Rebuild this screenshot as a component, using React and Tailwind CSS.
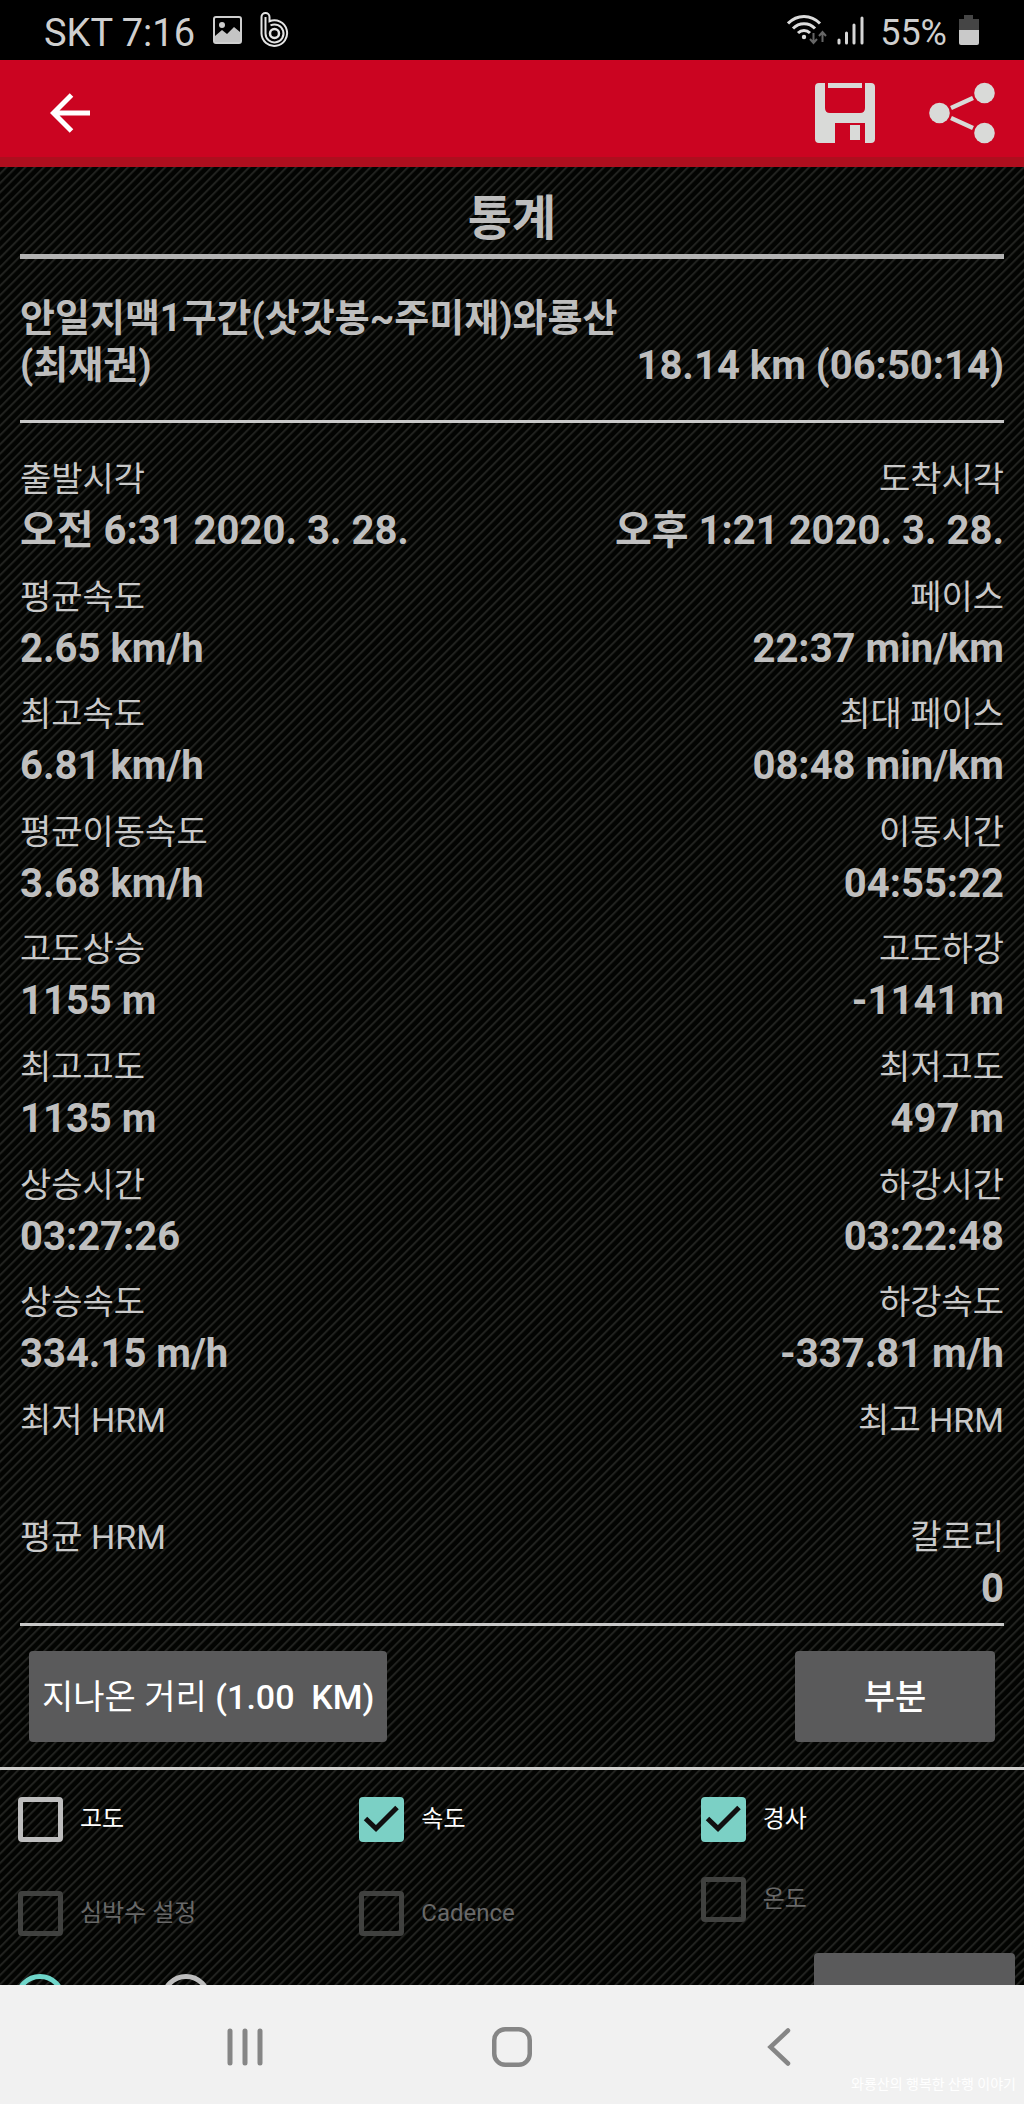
import React, { useState } from 'react';

const stats = [
  { left: ['출발시각', '오전 6:31 2020. 3. 28.'], right: ['도착시각', '오후 1:21 2020. 3. 28.'] },
  { left: ['평균속도', '2.65 km/h'], right: ['페이스', '22:37 min/km'] },
  { left: ['최고속도', '6.81 km/h'], right: ['최대 페이스', '08:48 min/km'] },
  { left: ['평균이동속도', '3.68 km/h'], right: ['이동시간', '04:55:22'] },
  { left: ['고도상승', '1155 m'], right: ['고도하강', '-1141 m'] },
  { left: ['최고고도', '1135 m'], right: ['최저고도', '497 m'] },
  { left: ['상승시간', '03:27:26'], right: ['하강시간', '03:22:48'] },
  { left: ['상승속도', '334.15 m/h'], right: ['하강속도', '-337.81 m/h'] },
  { left: ['최저 HRM', ''], right: ['최고 HRM', ''] },
  { left: ['평균 HRM', ''], right: ['칼로리', '0'] },
];

const options = [
  { id: 'altitude', label: '고도' },
  { id: 'speed', label: '속도' },
  { id: 'slope', label: '경사' },
  { id: 'hrm', label: '심박수 설정', disabled: true, className: 'pt-[14px]' },
  { id: 'cadence', label: 'Cadence', disabled: true, className: 'pt-[14px]' },
  { id: 'temp', label: '온도', disabled: true, className: 'self-start' },
];

export default function App() {
  const [checked, setChecked] = useState({ speed: true, slope: true });
  const [axis, setAxis] = useState('distance');

  const toggle = (id) => setChecked((c) => ({ ...c, [id]: !c[id] }));

  return (
    <div className="min-h-screen flex flex-col overflow-hidden bg-black font-['Roboto','Noto_Sans_CJK_KR',sans-serif]">
      <StatusBar />

      <header className="h-[107px] flex items-center justify-between bg-[#cb0421] border-b-[10px] border-[#ae0e1e] pt-[9px] pl-[50px] pr-[29px]">
        <button aria-label="뒤로"><BackArrow /></button>
        <div className="flex items-center gap-[54px]">
          <button aria-label="저장"><SaveIcon /></button>
          <button aria-label="공유"><ShareIcon /></button>
        </div>
      </header>

      <main className={`flex-1 flex flex-col ${stripes}`}>
        <div className="flex-1 flex flex-col px-5">
          <h1 className="pt-5 pb-[3px] text-center text-[48px] leading-[64px] font-bold text-[#bdbdbd]">통계</h1>
          <hr className="border-0 h-[5px] bg-[#b3b3b3]" />

          <div className="flex items-end justify-between gap-4 pt-9 pb-[31px] leading-[47px] font-bold text-[#bdbdbd]">
            <h2 className="text-[38px]">안일지맥1구간(삿갓봉~주미재)와룡산 (최재권)</h2>
            <p className="text-[40px] whitespace-nowrap">18.14 km (06:50:14)</p>
          </div>
          <hr className="border-0 h-[3px] bg-[#c8c8c8]" />

          <div className="flex-1 grid auto-rows-fr pt-6">
            {stats.map((row) => (
              <dl key={row.left[0]} className="flex justify-between pt-[9px]">
                <Stat label={row.left[0]} value={row.left[1]} />
                <Stat label={row.right[0]} value={row.right[1]} className="text-right" />
              </dl>
            ))}
          </div>
          <hr className="border-0 h-[3px] bg-[#c8c8c8]" />
        </div>

        <div className="flex justify-between px-[29px] py-[25px]">
          <button className={`${btnClass} px-[13px] whitespace-pre font-normal`}>지나온 거리 <span className="font-medium">(1.00  KM)</span></button>
          <button className={`${btnClass} w-[200px] font-medium`}>부분</button>
        </div>
        <hr className="border-0 h-[3px] bg-[#cdcdcb]" />

        <div className="grid grid-cols-3 gap-y-[35px] pt-[27px]">
          {options.map((o) => (
            <CheckOption key={o.id} option={o} checked={!!checked[o.id]} onChange={() => toggle(o.id)} />
          ))}
        </div>

        {/* runs on under the navigation bar */}
        <div className="h-[49px] overflow-hidden flex justify-between pl-[15px] pr-[9px]">
          <div className="flex gap-24 pt-[38px]">
            <input type="radio" name="axis" aria-label="거리" checked={axis === 'distance'} onChange={() => setAxis('distance')} className={radioClass} />
            <input type="radio" name="axis" aria-label="시간" checked={axis === 'time'} onChange={() => setAxis('time')} className={radioClass} />
          </div>
          <button aria-label="그래프" className={`${btnClass} w-[201px] mt-[17px]`} />
        </div>
      </main>

      <nav className="relative h-[119px] grid grid-cols-3 place-items-center bg-[#f1f1f1] px-28 pt-1">
        <button aria-label="최근 앱">
          <svg width="36" height="40" viewBox="0 0 36 40" stroke="#868686" strokeWidth="5" strokeLinecap="round">
            <path d="M3 4v32M18 4v32M33 4v32" />
          </svg>
        </button>
        <button aria-label="홈">
          <svg width="40" height="40" viewBox="0 0 40 40" fill="none" stroke="#868686" strokeWidth="4.5">
            <rect x="2.25" y="2.25" width="35.5" height="35.5" rx="11" />
          </svg>
        </button>
        <button aria-label="이전">
          <svg width="24" height="40" viewBox="0 0 24 40" fill="none" stroke="#868686" strokeWidth="4.5" strokeLinecap="round">
            <path d="M21 3.5L3.5 20L21 36.5" />
          </svg>
        </button>
        <span className="absolute right-2 bottom-2 text-sm leading-6 text-white">와룡산의 행복한 산행 이야기</span>
      </nav>
    </div>
  );
}

const stripes = 'bg-[#030402] bg-[repeating-linear-gradient(135deg,#030402_0%,#030402_calc(100%/12),#232421_calc(100%/9),#232421_calc(100%/8),#030402_calc(100%/6))] bg-size-[28px_28px]';
const btnClass = 'h-[91px] rounded-[4px] bg-[#5a5a5b] text-[34px] leading-[48px] text-white';
const radioClass = 'appearance-none size-[50px] shrink-0 rounded-full border-[5px] border-[#bdbdbd] checked:border-[#6fd6ca]';

function Stat({ label, value, className = '' }) {
  return (
    <div className={className}>
      <dt className="text-[34px] leading-[46px] text-[#c9c9c9]">{label}</dt>
      <dd className="text-[40px] leading-[58px] font-bold text-[#bfbfbf]">{value}</dd>
    </div>
  );
}

function CheckOption({ option, checked, onChange }) {
  return (
    <label className={`flex items-center gap-[17px] pl-[18px] text-2xl leading-[45px] ${option.disabled ? 'text-[#686868]' : 'text-white'} ${option.className || ''}`}>
      <span className="relative size-[45px] shrink-0">
        <input
          type="checkbox"
          checked={checked}
          disabled={option.disabled}
          onChange={onChange}
          className="block appearance-none size-[45px] rounded-[4px] border-[5px] border-[#bdbdbd] checked:border-[#7bd0c5] checked:bg-[#7bd0c5] disabled:border-[#40413f]"
        />
        {checked && (
          <svg className="absolute inset-0 pointer-events-none" width="45" height="45" viewBox="0 0 45 45" fill="none" stroke="#110f10" strokeWidth="5">
            <path d="M6.5 21.5L17 31.5L38 10.5" />
          </svg>
        )}
      </span>
      {option.label}
    </label>
  );
}

function StatusBar() {
  return (
    <div className="h-[60px] flex items-center justify-between bg-black pl-11 pr-[45px] leading-[60px] text-[#cfcfcf]">
      <div className="flex items-center">
        <span className="pt-[5px] text-[38px]">SKT 7:16</span>
        <svg className="ml-[18px]" width="29" height="28" viewBox="0 0 29 28">
          <rect x="1" y="1" width="27" height="26" rx="2" fill="none" stroke="#cfcfcf" strokeWidth="2" />
          <circle cx="9" cy="9" r="3" fill="#cfcfcf" />
          <path d="M2 20L9 14L14 18L21 11L27 16V26H2Z" fill="#c4c4c4" />
        </svg>
        <svg className="ml-[18px]" width="29" height="36" viewBox="0 0 29 36" fill="none" stroke="#e4e4e4" strokeWidth="2">
          <path d="M1.500 5a4 4 0 0 1 8 0V9.300A12.800 12.800 0 1 1 1.500 21.500Z" />
          <path d="M5.500 5V21.500a9 9 0 1 0 5-8.100" />
          <circle cx="14.500" cy="21.500" r="4.500" strokeWidth="2.500" />
        </svg>
      </div>
      <div className="flex items-center">
        <svg width="40" height="32" viewBox="0 0 40 32" fill="none" stroke="#dcdcdc" strokeWidth="3">
          <path d="M1 9.500C10 0 24 0 33 9.500M6 14.500C12 8 22 8 28 14.500M11 19C14.500 15.500 19.500 15.500 23 19" />
          <circle cx="17" cy="23" r="2.200" fill="#dcdcdc" stroke="none" />
          <path d="M26.500 19v9.500M23 25l3.500 4l3.500-4M35.500 28V18.500M32 22l3.500-4l3.500 4" stroke="#666" strokeWidth="2" />
        </svg>
        <svg className="ml-[10px]" width="27" height="29" viewBox="0 0 27 29" stroke="#d6d6d6" strokeWidth="3" strokeLinecap="round">
          <path d="M2 24v3M9.500 17v10M17 9v18M25 2v25" />
        </svg>
        <span className="ml-4 pt-[5px] text-[36px]">55%</span>
        <svg className="ml-3" width="20" height="30" viewBox="0 0 20 30">
          <path d="M5 0h9v4h6v11H0V4h5Z" fill="#454545" />
          <path d="M0 15h20v13q0 2-2 2H2q-2 0-2-2Z" fill="#c9c9c9" />
        </svg>
      </div>
    </div>
  );
}

function BackArrow() {
  return (
    <svg width="40" height="40" viewBox="0 0 40 40" fill="none" stroke="#fff" strokeWidth="5">
      <path d="M40 20H4M21.500 2L3.500 20L21.500 38" />
    </svg>
  );
}

function SaveIcon() {
  return (
    <svg width="60" height="60" viewBox="0 0 60 60" fill="#d9dad8">
      <path d="M4 0H10V25Q10 30 15 30H45Q50 30 50 25V0H56Q60 0 60 4V56Q60 60 56 60H50V40H20V60H4Q0 60 0 56V4Q0 0 4 0Z" />
      <path d="M13 0H47V5H13ZM35 42H45V57H35Z" />
    </svg>
  );
}

function ShareIcon() {
  return (
    <svg width="66" height="62" viewBox="0 0 66 62" fill="#d9dad8" stroke="#d9dad8">
      <g stroke="none">
        <circle cx="10.500" cy="31" r="10.300" />
        <circle cx="55.500" cy="11" r="10.300" />
        <circle cx="55.500" cy="51" r="10.300" />
      </g>
      <path d="M22 26L44 16M22 36L44 46" strokeWidth="4.500" />
    </svg>
  );
}
